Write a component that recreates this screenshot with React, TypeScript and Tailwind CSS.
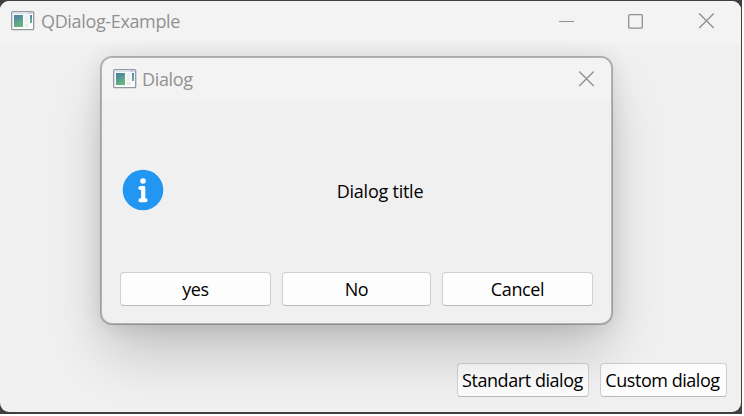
import type { ReactNode } from "react";

function AppIcon() {
  return (
    <svg width="24" height="20" viewBox="0 0 24 20" className="shrink-0">
      <defs>
        <linearGradient id="pane" x1="0" y1="0" x2="0.6" y2="1">
          <stop offset="0" stopColor="#5084a8" />
          <stop offset="1" stopColor="#67b47e" />
        </linearGradient>
        <linearGradient id="strip" x1="0" y1="0" x2="0" y2="1">
          <stop offset="0" stopColor="#5482b2" />
          <stop offset="1" stopColor="#6bb58a" />
        </linearGradient>
      </defs>
      <rect x="0.7" y="0.7" width="22" height="18" rx="1" fill="#fbfbfb" stroke="#9299a0" strokeWidth="1.3" />
      <rect x="1.6" y="1.5" width="20.2" height="1.5" fill="#dce3ed" />
      <rect x="17" y="1.5" width="4" height="1" fill="#b5bfd1" />
      <rect x="3" y="4" width="9" height="12" fill="url(#pane)" />
      <path d="M3 10Q8 9 12 5V4H3Z" fill="#4b7fa3" opacity="0.35" />
      <rect x="13.5" y="4" width="4" height="8" fill="#f0f0f0" />
      <rect x="13.5" y="13" width="4" height="3" fill="#ededed" />
      <rect x="19" y="4" width="2" height="8" fill="url(#strip)" />
    </svg>
  );
}

function CloseIcon() {
  return (
    <svg width="16" height="16" viewBox="0 0 16 16" fill="none" stroke="#919191" strokeWidth="1.4">
      <path d="M1.2.5l14.6 14.6M15.8.5L1.2 15.1" />
    </svg>
  );
}

function Button({ children, className }: { children: ReactNode; className: string }) {
  return (
    <button
      className={`flex h-[34px] shrink-0 items-center justify-center rounded-[4px] border border-[#d0d0d0] border-b-[#bababa] bg-[#fdfdfd] whitespace-nowrap ${className}`}
    >
      {children}
    </button>
  );
}

export default function App() {
  return (
    <div className="h-[416px] w-[744px] overflow-hidden bg-white font-['Open_Sans','Noto_Sans',sans-serif] text-[18px] leading-6 text-black">
      <div className="h-[414px] w-[742px] bg-[#403e41] pt-px">
        <main className="relative flex h-[411px] w-[741px] flex-col overflow-hidden rounded-[9px] bg-[#f0f0f0]">
          <header className="flex h-[43px] shrink-0 items-start bg-[#f3f3f3] pl-[11px] text-[#919191]">
            <div className="flex items-center gap-1.5 pt-2">
              <AppIcon />
              <span className="tracking-[-0.35px]">QDialog-Example</span>
            </div>
            <div className="ml-auto flex items-center gap-[54px] pt-[12px] pr-[27px]">
              <svg width="16" height="16" viewBox="0 0 16 16" className="block">
                <path d="M1 8.5H16" stroke="#919191" />
              </svg>
              <svg width="16" height="16" viewBox="0 0 16 16" className="block" fill="none">
                <rect x="0.7" y="1.6" width="13.6" height="13.6" rx="1" stroke="#919191" strokeWidth="1.3" />
              </svg>
              <CloseIcon />
            </div>
          </header>

          <footer className="mt-auto flex justify-end gap-[11px] pr-[14px] pb-[15px]">
            <Button className="w-[132px] pr-px tracking-[-0.44px]">Standart dialog</Button>
            <Button className="w-[127px] pr-[2px] tracking-[-0.46px]">Custom dialog</Button>
          </footer>

          <section className="absolute top-[55px] left-[100px] flex h-[269px] w-[513px] flex-col rounded-[12px] border-2 border-black/25 bg-[#f0f0f0] bg-clip-padding shadow-[0_32px_56px_-6px_rgba(0,0,0,0.2),0_2px_21px_rgba(0,0,0,0.1)]">
            <header className="flex h-[43px] shrink-0 items-start rounded-t-[10px] bg-[#f3f3f3] pr-[17px] pl-[11px] text-[#919191]">
              <div className="flex items-center gap-[5px] pt-[9px]">
                <AppIcon />
                <span className="tracking-[-0.33px]">Dialog</span>
              </div>
              <div className="ml-auto pt-[13px]">
                <CloseIcon />
              </div>
            </header>
            <div className="flex flex-1 items-center pt-[7px] pl-[20px]">
              <svg width="42" height="42" viewBox="0 0 42 42" className="shrink-0">
                <circle cx="21" cy="21" r="20.3" fill="#2196f3" />
                <circle cx="21" cy="12" r="2.8" fill="#fff" />
                <path
                  d="M18.3 17h3.6a1.4 1.4 0 0 1 1.4 1.4v10.9h.3a2 2 0 0 1 0 4h-5.2a2 2 0 0 1 0-4h.7v-8.3h-.8a2 2 0 0 1 0-4Z"
                  fill="#fff"
                />
              </svg>
              <p className="flex-1 pt-px pr-[15px] text-center tracking-[-0.24px]">Dialog title</p>
            </div>
            <div className="flex gap-[11px] px-[18px] pb-[17px]">
              <Button className="w-[151px] tracking-[-0.4px]">yes</Button>
              <Button className="w-[149px] tracking-[-0.4px]">No</Button>
              <Button className="w-[151px] tracking-[-0.4px]">Cancel</Button>
            </div>
          </section>
        </main>
      </div>
    </div>
  );
}
